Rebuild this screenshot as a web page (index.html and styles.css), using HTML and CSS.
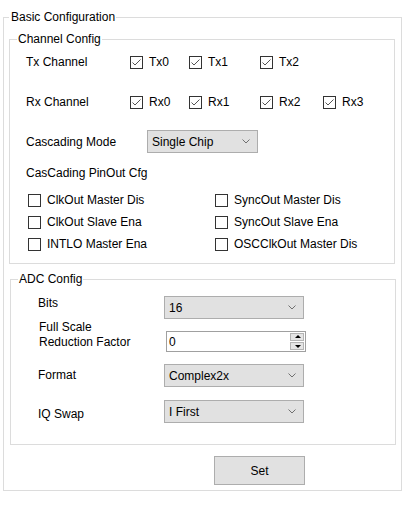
FILE: index.html
```html
<!DOCTYPE html>
<html>
<head>
<meta charset="utf-8">
<link rel="stylesheet" href="styles.css">
</head>
<body>
<fieldset class="group outer">
  <legend>Basic Configuration</legend>

  <fieldset class="group channel">
    <legend>Channel Config</legend>
    <div class="gbody ch-body">
      <div class="chan-row">
        <span class="lbl">Tx Channel</span>
        <label class="chk"><svg class="box" viewBox="0 0 13 13"><rect x="0.5" y="0.5" width="12" height="12" fill="#fff" stroke="#333"/><polyline points="2.5,6.5 5,9 10.5,3.5" fill="none" stroke="#555" stroke-width="1"/></svg>Tx0</label>
        <label class="chk"><svg class="box" viewBox="0 0 13 13"><rect x="0.5" y="0.5" width="12" height="12" fill="#fff" stroke="#333"/><polyline points="2.5,6.5 5,9 10.5,3.5" fill="none" stroke="#555" stroke-width="1"/></svg>Tx1</label>
        <label class="chk"><svg class="box" viewBox="0 0 13 13"><rect x="0.5" y="0.5" width="12" height="12" fill="#fff" stroke="#333"/><polyline points="2.5,6.5 5,9 10.5,3.5" fill="none" stroke="#555" stroke-width="1"/></svg>Tx2</label>
      </div>
      <div class="chan-row rx">
        <span class="lbl">Rx Channel</span>
        <label class="chk"><svg class="box" viewBox="0 0 13 13"><rect x="0.5" y="0.5" width="12" height="12" fill="#fff" stroke="#333"/><polyline points="2.5,6.5 5,9 10.5,3.5" fill="none" stroke="#555" stroke-width="1"/></svg>Rx0</label>
        <label class="chk"><svg class="box" viewBox="0 0 13 13"><rect x="0.5" y="0.5" width="12" height="12" fill="#fff" stroke="#333"/><polyline points="2.5,6.5 5,9 10.5,3.5" fill="none" stroke="#555" stroke-width="1"/></svg>Rx1</label>
        <label class="chk"><svg class="box" viewBox="0 0 13 13"><rect x="0.5" y="0.5" width="12" height="12" fill="#fff" stroke="#333"/><polyline points="2.5,6.5 5,9 10.5,3.5" fill="none" stroke="#555" stroke-width="1"/></svg>Rx2</label>
        <label class="chk"><svg class="box" viewBox="0 0 13 13"><rect x="0.5" y="0.5" width="12" height="12" fill="#fff" stroke="#333"/><polyline points="2.5,6.5 5,9 10.5,3.5" fill="none" stroke="#555" stroke-width="1"/></svg>Rx3</label>
      </div>
      <div class="mode-row">
        <span class="lbl">Cascading Mode</span>
        <div class="combo mode-combo"><span>Single Chip</span><svg class="chev" viewBox="0 0 8 5"><polyline points="0.5,0.5 4,4 7.5,0.5" fill="none" stroke="#707070"/></svg></div>
      </div>
      <div class="pin-title">CasCading PinOut Cfg</div>
      <div class="pin-grid">
        <label class="chk2"><span class="ubox"></span>ClkOut Master Dis</label>
        <label class="chk2"><span class="ubox"></span>SyncOut Master Dis</label>
        <label class="chk2"><span class="ubox"></span>ClkOut Slave Ena</label>
        <label class="chk2"><span class="ubox"></span>SyncOut Slave Ena</label>
        <label class="chk2"><span class="ubox"></span>INTLO Master Ena</label>
        <label class="chk2"><span class="ubox"></span>OSCClkOut Master Dis</label>
      </div>
    </div>
  </fieldset>

  <fieldset class="group adc">
    <legend>ADC Config</legend>
    <div class="gbody adc-body">
      <div class="adc-row bits">
        <span class="lbl">Bits</span>
        <div class="combo adc-combo"><span>16</span><svg class="chev" viewBox="0 0 8 5"><polyline points="0.5,0.5 4,4 7.5,0.5" fill="none" stroke="#707070"/></svg></div>
      </div>
      <div class="adc-row fsr">
        <span class="lbl">Full Scale<br>Reduction Factor</span>
        <div class="spin"><span class="val">0</span><div class="spin-btns"><span class="sb up"></span><span class="sb down"></span></div></div>
      </div>
      <div class="adc-row fmt">
        <span class="lbl">Format</span>
        <div class="combo adc-combo"><span>Complex2x</span><svg class="chev" viewBox="0 0 8 5"><polyline points="0.5,0.5 4,4 7.5,0.5" fill="none" stroke="#707070"/></svg></div>
      </div>
      <div class="adc-row iq">
        <span class="lbl">IQ Swap</span>
        <div class="combo adc-combo"><span>I First</span><svg class="chev" viewBox="0 0 8 5"><polyline points="0.5,0.5 4,4 7.5,0.5" fill="none" stroke="#707070"/></svg></div>
      </div>
    </div>
  </fieldset>

  <div class="actions"><button class="btn">Set</button></div>
</fieldset>
</body>
</html>
```

FILE: styles.css
```css
* { box-sizing: border-box; }

body {
  margin: 0;
  padding: 10px 0 0 3px;
  background: #fff;
  color: #000;
  font: 12px/14px "Liberation Sans", Arial, sans-serif;
}

.group {
  border: 1px solid #dcdcdc;
  margin: 0;
  min-width: 0;
}

.group > legend {
  padding: 0 1px 0 1px;
  line-height: 14px;
}

.outer {
  width: 399px;
  padding: 8px 6px 5px 5px;
}
.outer > legend { padding-left: 2px; }

.channel {
  width: 386px;
  margin-bottom: 8px;
  padding: 6px 0 8px 7px;
}

.ch-body { padding-left: 9px; }

.chan-row {
  display: grid;
  grid-template-columns: 104px 59px 71px 63px 60px;
  align-items: center;
  height: 20px;
}
.chan-row.rx { margin-top: 20px; }

.chk {
  display: flex;
  align-items: center;
  gap: 6px;
}
.box {
  width: 13px;
  height: 13px;
  display: block;
  flex: none;
}

.mode-row {
  display: grid;
  grid-template-columns: 121px auto;
  align-items: center;
  margin-top: 18px;
}
.lbl { white-space: nowrap; }

.combo {
  height: 23px;
  background: #e1e1e1;
  border: 1px solid #adadad;
  display: flex;
  align-items: center;
  justify-content: space-between;
  padding: 0 7px 0 4px;
}
.chev { width: 8px; height: 5px; display: block; }

.mode-combo { width: 111px; }

.pin-title { margin-top: 13px; }

.pin-grid {
  display: grid;
  grid-template-columns: 187px 160px;
  grid-auto-rows: 22px;
  margin-top: 9px;
  padding-left: 2px;
}
.chk2 {
  display: flex;
  align-items: center;
  gap: 6px;
  white-space: nowrap;
}
.ubox {
  width: 13px;
  height: 13px;
  border: 1px solid #333;
  background: #fff;
  flex: none;
}

.adc {
  width: 386px;
  margin-left: 1px;
  padding: 10px 0 21px 7px;
}
.adc > legend { padding-left: 1px; }

.adc-body { padding-left: 20px; }

.adc-row {
  display: grid;
  grid-template-columns: 126px 140px;
}
.adc-row .lbl { line-height: 15px; }
.fsr { margin-top: 1px; height: 32px; }
.fsr .lbl { align-self: start; padding-left: 1px; }
.fmt { margin-top: 12px; align-items: center; }
.iq { margin-top: 13px; align-items: center; }
.iq .lbl { margin-top: 5px; }

.adc-combo { width: 140px; }

.spin {
  align-self: end;
  margin-left: 2px;
  width: 140px;
  height: 21px;
  border: 1px solid #a0a0a0;
  background: #fff;
  display: flex;
  align-items: center;
  justify-content: space-between;
  padding: 0 1px 0 2px;
}
.spin-btns {
  display: flex;
  flex-direction: column;
  gap: 1px;
}
.sb {
  width: 14px;
  height: 8px;
  background: #e5e5e5;
  border: 1px solid #b4b4b4;
  position: relative;
  display: block;
}
.sb::after {
  content: "";
  position: absolute;
  left: 4px;
  width: 0;
  height: 0;
  border-left: 3px solid transparent;
  border-right: 3px solid transparent;
}
.sb.up::after { top: 1px; border-bottom: 3px solid #000; }
.sb.down::after { top: 2px; border-top: 3px solid #000; }

.actions {
  display: flex;
  padding-left: 205px;
  margin-top: 11px;
}
.btn {
  width: 91px;
  height: 29px;
  background: #e1e1e1;
  border: 1px solid #adadad;
  font: 12px "Liberation Sans", Arial, sans-serif;
  color: #000;
  padding: 0;
  margin: 0;
}
```
